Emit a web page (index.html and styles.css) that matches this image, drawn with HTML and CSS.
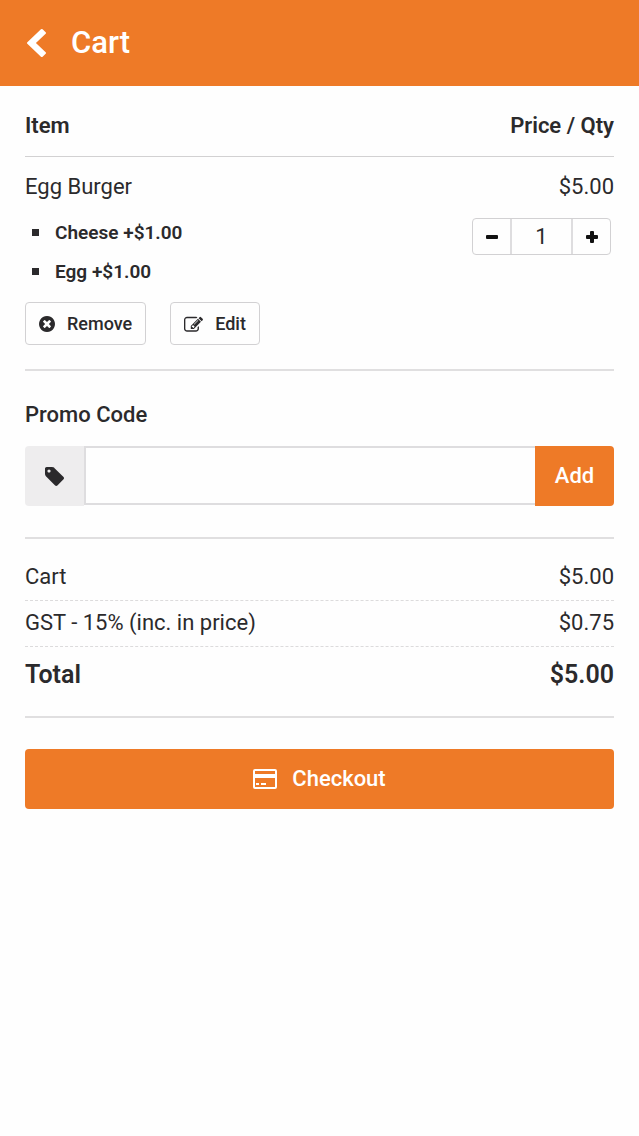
FILE: index.html
```html
<!DOCTYPE html>
<html lang="en">
<head>
    <meta charset="UTF-8">
    <meta name="viewport" content="width=device-width, initial-scale=1.0">
    <title>Cart</title>
    <link rel="stylesheet" href="styles.css">
</head>
<body>
    <header class="topbar">
        <button type="button" class="back" aria-label="Back">
            <svg width="19" height="28" viewBox="410 26 1036 1612" preserveAspectRatio="none" fill="currentColor"><path d="M1427 301L896 832l531 531q19 19 19 45t-19 45l-166 166q-19 19-45 19t-45-19L429 877q-19-19-19-45t19-45l742-742q19-19 45-19t45 19l166 166q19 19 19 45t-19 45z"/></svg>
        </button>
        <h1>Cart</h1>
    </header>

    <main class="cart">
        <div class="row head">
            <span>Item</span>
            <span>Price / Qty</span>
        </div>

        <section class="item">
            <div class="row">
                <span>Egg Burger</span>
                <span>$5.00</span>
            </div>
            <div class="details">
                <ul class="extras">
                    <li>Cheese +$1.00</li>
                    <li>Egg +$1.00</li>
                </ul>
                <div class="qty">
                    <button type="button" aria-label="Less">
                        <svg width="12" height="12" viewBox="0 0 12 12" fill="currentColor"><rect y="4" width="12" height="4" rx="1"/></svg>
                    </button>
                    <input type="text" value="1" aria-label="Quantity">
                    <button type="button" aria-label="More">
                        <svg width="12" height="12" viewBox="0 0 12 12" fill="currentColor"><path d="M5 0h2q1 0 1 1v3h3q1 0 1 1v2q0 1-1 1H8v3q0 1-1 1H5q-1 0-1-1V8H1q-1 0-1-1V5q0-1 1-1h3V1q0-1 1-1z"/></svg>
                    </button>
                </div>
            </div>
            <div class="actions">
                <button type="button" class="btn">
                    <svg width="16" height="16" viewBox="128 128 1536 1536" fill="currentColor"><path d="M1277 1122q0-26-19-45L1077 896l181-181q19-19 19-45 0-27-19-46l-90-90q-19-19-46-19-26 0-45 19L896 715 715 534q-19-19-45-19-27 0-46 19l-90 90q-19 19-19 46 0 26 19 45l181 181-181 181q-19 19-19 45 0 27 19 46l90 90q19 19 46 19 26 0 45-19l181-181 181 181q19 19 45 19 27 0 46-19l90-90q19-19 19-46zm387-226q0 209-103 385.500T1281.500 1561 896 1664t-385.500-103T231 1281.500 128 896t103-385.500T510.500 231 896 128t385.500 103T1561 510.500 1664 896z"/></svg>
                    Remove
                </button>
                <button type="button" class="btn">
                    <svg width="19" height="16" viewBox="0 60 1792 1500" fill="currentColor"><path d="M888 1184l116-116-152-152-116 116v56h96v96h56zm440-720q-16-16-33 1l-350 350q-17 17-1 33t33-1l350-350q17-17 1-33zm80 594v190q0 119-84.500 203.500T1120 1536H288q-119 0-203.500-84.500T0 1248V416q0-119 84.500-203.500T288 128h832q63 0 117 25 15 7 18 23 3 17-9 29l-49 49q-14 14-32 8-23-6-45-6H288q-66 0-113 47t-47 113v832q0 66 47 113t113 47h832q66 0 113-47t47-113v-126q0-13 9-22l64-64q15-15 35-7t20 29zm-96-738l288 288-672 672H640V992zm444 132l-92 92-288-288 92-92q28-28 68-28t68 28l152 152q28 28 28 68t-28 68z"/></svg>
                    Edit
                </button>
            </div>
        </section>

        <section class="promo">
            <label for="promo">Promo Code</label>
            <div class="promo-group">
                <span class="addon">
                    <svg width="19" height="19" viewBox="128 256 1515 1515" fill="currentColor"><path d="M576 576q0-53-37.500-90.500T448 448t-90.500 37.500T320 576t37.500 90.500T448 704t90.500-37.500T576 576zm1067 576q0 53-37 90l-491 492q-39 37-91 37-53 0-90-37L219 1018q-38-37-64.500-101T128 800V384q0-52 38-90t90-38h416q53 0 117 26.500T891 347l715 714q37 39 37 91z"/></svg>
                </span>
                <input type="text" id="promo">
                <button type="button">Add</button>
            </div>
        </section>

        <section class="totals">
            <div class="row">
                <span>Cart</span>
                <span>$5.00</span>
            </div>
            <div class="row">
                <span>GST - 15% (inc. in price)</span>
                <span>$0.75</span>
            </div>
            <div class="row total">
                <span>Total</span>
                <span>$5.00</span>
            </div>
        </section>

        <button type="button" class="checkout">
            <svg width="24" height="20" viewBox="0 0 24 20"><rect x="1" y="1" width="22" height="18" rx="1" fill="none" stroke="currentColor" stroke-width="2"/><path d="M1 5h22v4H1zM3 14h3v2H3zM8 14h5v2H8z" fill="currentColor"/></svg>
            Checkout
        </button>
    </main>
</body>
</html>
```

FILE: styles.css
```css
* {
    margin: 0;
    padding: 0;
    box-sizing: border-box;
}

body {
    background-color: #fefefe;
    color: #2b2a2c;
    font-family: Roboto, Arial, sans-serif;
    font-size: 22px;
    line-height: 26px;
}

button, input {
    font: inherit;
    color: inherit;
}

button {
    border: none;
    background: none;
    cursor: pointer;
}

svg {
    display: block;
    flex: none;
}

.topbar {
    display: flex;
    align-items: center;
    gap: 25px;
    height: 86px;
    padding: 0 27px;
    background-color: #ee7a27;
    color: #fff;
}

.topbar h1 {
    font-size: 31px;
    font-weight: 500;
    line-height: 36px;
}

.cart {
    padding: 0 25px;
}

.row {
    display: flex;
    justify-content: space-between;
}

.head {
    padding: 27px 0 17px;
    border-bottom: 1px solid #d2d1d2;
    font-weight: 600;
}

/* item */
.item {
    padding: 17px 0 24px;
    border-bottom: 2px solid #e0dfe0;
}

.details {
    display: flex;
    justify-content: space-between;
    align-items: flex-start;
    padding-top: 17px;
}

.extras {
    list-style: none;
    font-size: 19px;
    font-weight: 600;
}

.extras li {
    display: flex;
    align-items: center;
    gap: 16px;
    height: 39px;
    padding: 0 0 8px 7px;
}

.extras li::before {
    content: "";
    width: 7px;
    height: 7px;
    background-color: #2b2a2c;
}

.qty {
    display: flex;
    height: 37px;
    margin: 1px 3px 0 0;
    border: 1px solid #d2d1d3;
    border-radius: 4px;
}

.qty button {
    display: flex;
    align-items: center;
    justify-content: center;
    width: 37px;
    color: #111;
}

.qty input {
    width: 63px;
    border: solid #dedddf;
    border-width: 0 2px;
    background: none;
    text-align: center;
}

.actions {
    display: flex;
    gap: 24px;
    padding-top: 7px;
}

.btn {
    display: flex;
    align-items: center;
    gap: 12px;
    height: 43px;
    padding: 0 13px;
    border: 1px solid #d2d1d3;
    border-radius: 4px;
    font-size: 18px;
    font-weight: 500;
}

/* promo code */
.promo {
    padding: 31px 0;
    border-bottom: 2px solid #e0dfe0;
}

.promo label {
    display: block;
    padding-bottom: 18px;
    font-weight: 500;
}

.promo-group {
    display: flex;
    height: 60px;
}

.addon {
    display: flex;
    align-items: center;
    justify-content: center;
    width: 59px;
    background-color: #eeedee;
    border-radius: 4px 0 0 4px;
}

.promo-group input {
    flex: 1;
    min-width: 0;
    height: 59px;
    padding: 0 12px;
    border: 2px solid #dedddf;
    border-right: none;
    background: none;
}

.promo-group button {
    width: 79px;
    border-radius: 0 4px 4px 0;
    background-color: #ee7a27;
    color: #fff;
    font-weight: 500;
}

/* totals */
.totals {
    padding: 16px 0 20px;
    border-bottom: 2px solid #e0dfe0;
}

.totals .row {
    padding: 9px 0 10px;
    border-bottom: 1px dashed #dcdbdc;
}

.totals .total {
    padding: 15px 0 8px;
    border: none;
    font-size: 25px;
    font-weight: 600;
}

.checkout {
    display: flex;
    align-items: center;
    justify-content: center;
    gap: 15px;
    width: 100%;
    height: 60px;
    margin-top: 31px;
    border-radius: 4px;
    background-color: #ee7a27;
    color: #fff;
    font-weight: 500;
}
```
